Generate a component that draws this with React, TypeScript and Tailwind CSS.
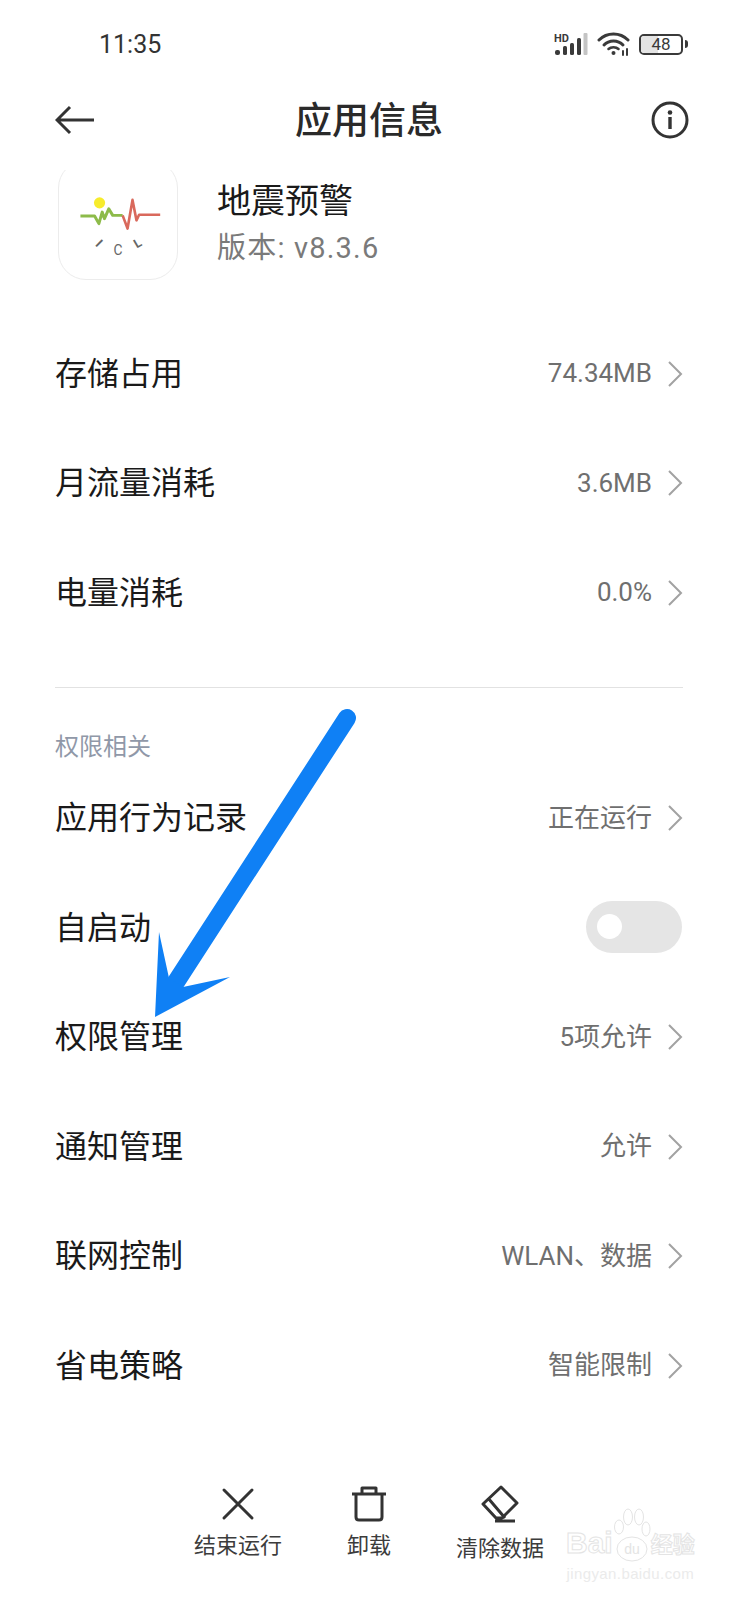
import React from 'react';

const font = { cjk: 'font-["Roboto","Noto_Sans_CJK_SC",sans-serif]' };

const Chevron = () => (
  <svg width="16" height="28" viewBox="0 0 16 28" fill="none" className="shrink-0">
    <path d="M2 2 L14 14 L2 26" stroke="#a2a2a2" strokeWidth="2" />
  </svg>
);

const Row: React.FC<{ label: string; value: string }> = ({ label, value }) => (
  <div className="h-[109.5px] flex items-center justify-between pl-[55px] pr-[55px]">
    <span className="text-[32px] text-[#1a1a1a]">{label}</span>
    <div className="flex items-center gap-[15px]">
      <span className="text-[26px] text-[#6f6f6f]">{value}</span>
      <Chevron />
    </div>
  </div>
);

const StatusIcons = () => (
  <div className="flex items-center gap-[9px]">
    <svg width="34" height="24" viewBox="0 0 34 24">
      <text x="0" y="10" fontSize="11" fontWeight="700" fill="#3a3a3a" fontFamily="Roboto, sans-serif">HD</text>
      <rect x="1" y="18" width="5" height="5" rx="2" fill="#3a3a3a" />
      <rect x="9" y="14" width="4" height="9" rx="1.5" fill="#3a3a3a" />
      <rect x="16" y="11" width="4" height="12" rx="1.5" fill="#3a3a3a" />
      <rect x="23" y="6" width="4" height="17" rx="1.5" fill="#3a3a3a" />
      <rect x="29.5" y="1" width="4" height="22" rx="1" fill="#c4c4c4" />
    </svg>
    <svg width="33" height="24" viewBox="0 0 33 24" fill="none" stroke="#3a3a3a" strokeLinecap="round">
      <path d="M2 8 C10 0 23 0 31 8" strokeWidth="3" />
      <path d="M7 13 C12 7.5 21 7.5 26 13" strokeWidth="3" />
      <path d="M11.5 17 C14 14.500 19 14.500 21.500 17" strokeWidth="2.500" />
      <circle cx="16.500" cy="21" r="2" fill="#3a3a3a" stroke="none" />
      <path d="M26 19 V23 M30 17 V23" strokeWidth="2" />
    </svg>
    <div className="flex items-center gap-[2px]">
      <div className="relative w-[44px] h-[21px] rounded-[5px] border-2 border-[#3a3a3a] overflow-hidden flex items-center justify-center">
        <div className="absolute left-0 top-0 bottom-0 w-[17px] bg-[#e4e4e4]" />
        <span className="relative text-[17px] leading-none text-[#3a3a3a] font-['Roboto',sans-serif]">48</span>
      </div>
      <div className="w-[3px] h-[8px] rounded-r-sm bg-[#3a3a3a]" />
    </div>
  </div>
);

const AppLogo = () => (
  <div className="w-[120px] h-[120px] rounded-[28px] border border-[#ececec] bg-white shrink-0 overflow-hidden">
    <svg width="118" height="118" viewBox="57 0 358 358" fill="none">
      <circle cx="180" cy="127" r="17" fill="#f7ec2c" />
      <path d="M122 167 H165 L178 190 L188 155 L195 175 L208 145 L220 165 H250" stroke="#8dbb4a" strokeWidth="9" strokeLinejoin="round" />
      <path d="M250 165 L265 205 L280 118 L292 180 L300 163 H364" stroke="#d9695c" strokeWidth="8" strokeLinejoin="round" />
      <text x="236" y="284" fontSize="42" fill="#666" textAnchor="middle" fontFamily="Roboto, sans-serif">C</text>
      <text x="178" y="262" fontSize="38" fontWeight="700" fill="#666" textAnchor="middle" fontFamily="Roboto, sans-serif" transform="rotate(45 178 250)">I</text>
      <text x="296" y="262" fontSize="38" fontWeight="700" fill="#666" textAnchor="middle" fontFamily="Roboto, sans-serif" transform="rotate(-30 296 250)">L</text>
    </svg>
  </div>
);

const BottomAction: React.FC<{ label: string; low?: boolean; children: React.ReactNode }> = ({ label, low, children }) => (
  <div className="w-[131px] flex flex-col items-center">
    <div className="h-[40px] flex items-center justify-center">{children}</div>
    <span className={`text-[22px] leading-[30px] text-[#3c3c3c] ${low ? 'mt-[10px]' : 'mt-[7px]'}`}>{label}</span>
  </div>
);

export default function App() {
  return (
    <div className={`relative w-[738px] h-[1600px] bg-white overflow-hidden flex flex-col ${font.cjk}`}>
      {/* status bar */}
      <div className="h-[90px] -mb-[2px] flex items-center justify-between pl-[99px] pr-[50px]">
        <span className="text-[25px] text-[#333] font-['Roboto',sans-serif]">11:35</span>
        <div className="-mt-[2px]">
          <StatusIcons />
        </div>
      </div>

      {/* title bar */}
      <div className="relative h-[82px] pb-[18px] flex items-center justify-between pl-[55px] pr-[49px] bg-white">
        <svg width="40" height="30" viewBox="0 0 40 30" fill="none" stroke="#333" strokeWidth="3">
          <path d="M39 15 H3 M15 2 L2 15 L15 28" />
        </svg>
        <span className="absolute left-0 right-0 top-[7px] text-center text-[37px] leading-[54px] font-medium text-[#2a2a2a]">应用信息</span>
        <svg width="38" height="38" viewBox="0 0 38 38" fill="none">
          <circle cx="19" cy="19" r="17" stroke="#333" strokeWidth="3" />
          <circle cx="19" cy="11.500" r="2.300" fill="#333" />
          <rect x="17.300" y="16" width="3.400" height="12" fill="#333" />
        </svg>
      </div>

      {/* scrolled content, clipped under the title bar */}
      <div className="flex-1 overflow-hidden flex flex-col">
        <div className="-mt-[10px] pl-[58px] flex items-center gap-[39px]">
          <AppLogo />
          <div className="flex flex-col pt-[6px]">
            <span className="text-[34px] leading-[46px] text-[#1a1a1a]">地震预警</span>
            <span className="mt-[4px] text-[29px] leading-[40px] tracking-[1.2px] text-[#7a7a7a]">版本: v8.3.6</span>
          </div>
        </div>

        <div className="mt-[39px]">
          <Row label="存储占用" value="74.34MB" />
          <Row label="月流量消耗" value="3.6MB" />
          <Row label="电量消耗" value="0.0%" />
        </div>

        <div className="mt-[39px] mx-[55px] h-px bg-[#e2e2e2]" />

        <div className="h-[76px] pl-[55px] pt-[42px] text-[24px] leading-[34px] text-[#9098a8]">权限相关</div>

        <Row label="应用行为记录" value="正在运行" />
        <div className="h-[109.5px] flex items-center justify-between pl-[55px] pr-[56px]">
          <span className="text-[32px] text-[#1a1a1a]">自启动</span>
          <div className="-mt-[2px] w-[96px] h-[52px] rounded-full bg-[#e5e5e5] flex items-center pl-[11px]">
            <div className="w-[25px] h-[25px] rounded-full bg-white" />
          </div>
        </div>
        <Row label="权限管理" value="5项允许" />
        <Row label="通知管理" value="允许" />
        <Row label="联网控制" value="WLAN、数据" />
        <Row label="省电策略" value="智能限制" />
      </div>

      {/* bottom actions */}
      <div className="h-[116px] flex justify-center items-start">
        <BottomAction label="结束运行">
          <svg width="34" height="34" viewBox="0 0 34 34" fill="none" stroke="#333" strokeWidth="3" strokeLinecap="round">
            <path d="M3 3 L31 31 M31 3 L3 31" />
          </svg>
        </BottomAction>
        <BottomAction label="卸载">
          <svg width="36" height="36" viewBox="0 0 36 36" fill="none" stroke="#333" strokeWidth="3" strokeLinejoin="round">
            <path d="M1 8 H35 M11 8 V2 H25 V8 M5 8 V31 Q5 34 8 34 H28 Q31 34 31 31 V8" />
          </svg>
        </BottomAction>
        <BottomAction label="清除数据" low>
          <svg width="38" height="38" viewBox="0 0 38 38" fill="none" stroke="#333" strokeWidth="3" strokeLinejoin="round">
            <path d="M20 2 L36 18 L21 33 H15 L2 19 Z M7 13 L24 33 M14 36 H34" />
          </svg>
        </BottomAction>
      </div>

      {/* annotation arrow painted over the screenshot */}
      <svg className="absolute left-0 top-0 pointer-events-none" width="738" height="1600" viewBox="0 0 738 1600" fill="none">
        <path d="M347 718 L176 982" stroke="#0f80f5" strokeWidth="18" strokeLinecap="round" />
        <path d="M159 932 L169 978 L183 987 L230 977 L155 1017 Z" fill="#0f80f5" />
      </svg>

      {/* baidu watermark */}
      <div className="absolute left-[566px] top-[1520px] flex flex-col items-center font-['Liberation_Sans',sans-serif] pointer-events-none">
        <div className="flex items-center h-[44px]">
          <span className="text-[30px] font-bold text-white [-webkit-text-stroke:1px_#e4e4e4]">Bai</span>
          <svg width="38" height="58" viewBox="0 0 38 58" fill="none" stroke="#e4e4e4" strokeWidth="1" className="-mt-[16px]">
            <ellipse cx="19" cy="44" rx="15" ry="12" />
            <ellipse cx="6" cy="22" rx="4.500" ry="7" />
            <ellipse cx="15" cy="12" rx="4.500" ry="8" />
            <ellipse cx="26" cy="12" rx="4.500" ry="8" />
            <ellipse cx="33" cy="24" rx="4" ry="7" />
            <text x="19" y="49" fontSize="14" textAnchor="middle" fill="#e4e4e4" stroke="none">du</text>
          </svg>
          <span className="text-[22px] font-bold text-white [-webkit-text-stroke:1px_#e4e4e4] font-['Noto_Sans_CJK_SC',sans-serif]">经验</span>
        </div>
        <span className="text-[15px] leading-[20px] tracking-[0.4px] text-[#ebebeb]">jingyan.baidu.com</span>
      </div>
    </div>
  );
}
